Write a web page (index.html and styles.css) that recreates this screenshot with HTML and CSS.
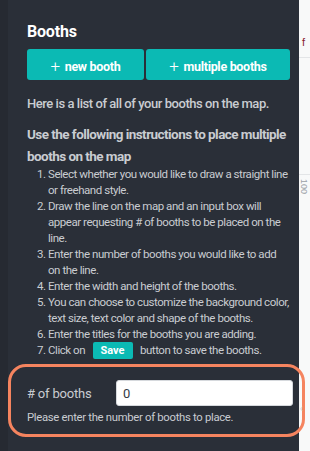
FILE: index.html
```html
<!DOCTYPE html>
<html lang="en">
<head>
    <meta charset="UTF-8">
    <title>Booths</title>
    <link rel="stylesheet" href="styles.css">
</head>
<body>
    <div class="page">
        <div class="panel">
            <div class="content">
                <h2 class="title">Booths</h2>
                <div class="actions">
                    <button class="btn btn-new"><span class="plus">+</span> new booth</button>
                    <button class="btn btn-multi"><span class="plus">+</span> multiple booths</button>
                </div>
                <p class="intro">Here is a list of all of your booths on the map.</p>
                <p class="lead">Use the following instructions to place multiple booths on the map</p>
                <ol class="steps">
                    <li>Select whether you would like to draw a straight line or freehand style.</li>
                    <li>Draw the line on the map and an input box will appear requesting # of booths to be placed on the line.</li>
                    <li>Enter the number of booths you would like to add on the line.</li>
                    <li>Enter the width and height of the booths.</li>
                    <li>You can choose to customize the background color, text size, text color and shape of the booths.</li>
                    <li>Enter the titles for the booths you are adding.</li>
                    <li>Click on <span class="save">Save</span> button to save the booths.</li>
                </ol>
            </div>
            <div class="count-box">
                <div class="count-row">
                    <label class="count-label" for="count">#&nbsp;of booths</label>
                    <input id="count" class="count-input" type="text" value="0">
                </div>
                <p class="hint">Please enter the number of booths to place.</p>
            </div>
            <span class="collapse">&lsaquo;</span>
        </div>
        <div class="side">
            <div class="side-top"></div>
            <div class="side-mid"><span class="side-f">f</span></div>
            <div class="side-ruler"><span class="side-num">100</span></div>
        </div>
    </div>
</body>
</html>
```

FILE: styles.css
```css
*{
    padding: 0;
    margin: 0;
    box-sizing: border-box;
}
body{
    width: 310px;
    height: 451px;
    overflow: hidden;
    background: #f8f9f9;
    font-family: Roboto, "Liberation Sans", sans-serif;
}
.page{
    display: flex;
    height: 451px;
}
.panel{
    position: relative;
    width: 299px;
    flex: none;
    background: #2a2f38;
    border-left: 8px solid #262a32;
    padding: 0 9px 0 0;
    color: #c9ccd1;
}
.content{
    padding-left: 19px;
}
.title{
    color: #ffffff;
    font-size: 16px;
    font-weight: 700;
    letter-spacing: -0.2px;
    padding-top: 22px;
    line-height: 20px;
    margin-bottom: 7px;
}
.actions{
    display: flex;
    gap: 2px;
}
.btn{
    border: none;
    border-radius: 3px;
    background: #0bbab4;
    color: #ffffff;
    font-family: inherit;
    font-size: 12.5px;
    font-weight: 700;
    letter-spacing: -0.3px;
    height: 31px;
}
.btn-new{ width: 117px; }
.btn-multi{ width: 144px; }
.plus{
    font-weight: 300;
    font-size: 17px;
    margin-right: 2px;
    position: relative;
    top: 1px;
}
.intro{
    font-size: 13px;
    font-weight: 500;
    letter-spacing: -0.45px;
    margin-top: 15px;
    line-height: 18px;
}
.lead{
    font-size: 13.5px;
    font-weight: 700;
    letter-spacing: -0.55px;
    margin-top: 10px;
    line-height: 22px;
}
.steps{
    font-size: 11.5px;
    letter-spacing: -0.45px;
    line-height: 16px;
    padding-left: 21px;
    margin-top: -1px;
}
.save{
    background: #0bbab4;
    color: #ffffff;
    font-weight: 700;
    font-size: 11px;
    letter-spacing: 0;
    padding: 2px 8px;
    margin: 0 5px;
    border-radius: 2px;
}
.count-box{
    margin-top: 5px;
    margin-right: -15px;
    height: 73px;
    border: 3.5px solid #f5845f;
    border-radius: 18px;
    padding: 13px 0 0 16px;
}
.count-row{
    display: flex;
    align-items: center;
}
.count-label{
    width: 89px;
    font-size: 13px;
    letter-spacing: -0.2px;
}
.count-input{
    width: 177px;
    height: 26px;
    border: 1px solid #d6d9dd;
    border-radius: 3px;
    padding: 0 6px;
    font-family: inherit;
    font-size: 13px;
    color: #333a45;
    outline: none;
}
.hint{
    font-size: 11.3px;
    letter-spacing: -0.3px;
    margin-top: 5px;
}
.collapse{
    position: absolute;
    right: -4px;
    top: 402px;
    color: #d0d3d7;
    font-size: 11px;
    line-height: 14px;
}
.side{
    flex: 1;
    display: flex;
    flex-direction: column;
}
.side-top{
    height: 58px;
    border-bottom: 1px solid #e3e5e7;
}
.side-mid{
    height: 117px;
    border-bottom: 1px solid #e3e5e7;
    position: relative;
}
.side-f{
    position: absolute;
    left: 3px;
    top: -22px;
    font-size: 11px;
    color: #8a2030;
    font-family: "Liberation Sans", sans-serif;
}
.side-ruler{
    position: relative;
    flex: 1;
}
.side-num{
    position: absolute;
    left: 0;
    top: 4px;
    font-size: 9px;
    color: #9aa0a6;
    writing-mode: vertical-rl;
    font-family: "Liberation Sans", sans-serif;
}
```
